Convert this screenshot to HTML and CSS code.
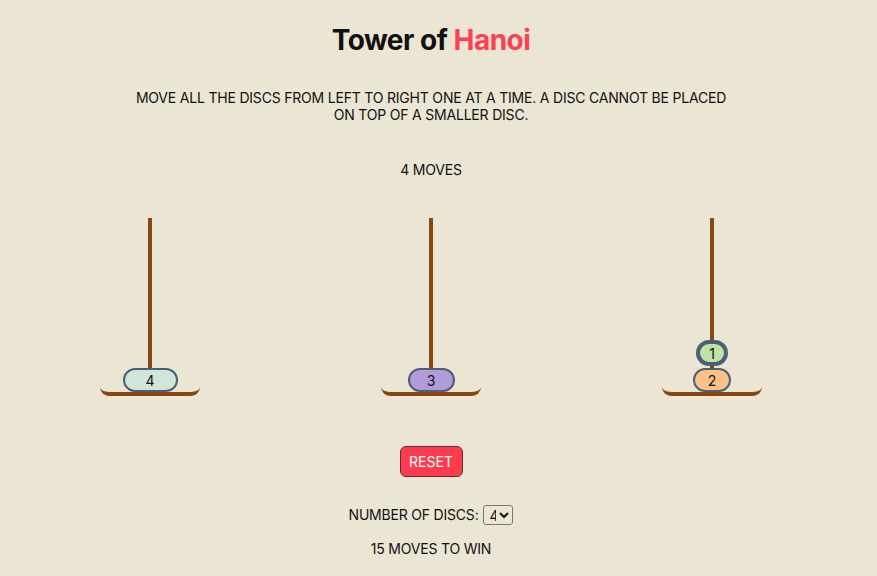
FILE: index.html
```html
<!DOCTYPE html>
<html>
<head>
<meta charset="utf-8">
<link rel="stylesheet" href="styles.css">
</head>
<body>
<main class="app">
  <h1 class="title">Tower of <span class="accent">Hanoi</span></h1>
  <p class="rules">Move all the discs from left to right one at a time. A disc cannot be placed on top of a smaller disc.</p>
  <p class="moves">4 moves</p>
  <div class="towers">
    <div class="tower">
      <div class="pole"></div>
      <div class="stack">
        <div class="disc d4">4</div>
      </div>
      <div class="base"></div>
    </div>
    <div class="tower">
      <div class="pole"></div>
      <div class="stack">
        <div class="disc d3">3</div>
      </div>
      <div class="base"></div>
    </div>
    <div class="tower">
      <div class="pole"></div>
      <div class="stack">
        <div class="disc d1 selected">1</div>
        <div class="disc d2">2</div>
      </div>
      <div class="base"></div>
    </div>
  </div>
  <button class="reset">Reset</button>
  <div class="count">
    <label for="discs">Number of discs:</label>
    <select id="discs" class="select">
      <option>3</option>
      <option selected>4</option>
      <option>5</option>
    </select>
  </div>
  <p class="win">15 moves to win</p>
</main>
</body>
</html>
```
FILE: styles.css
```css
html, body {
  margin: 0;
  padding: 0;
  background: #ebe5d4;
}
body {
  font-family: Inter, "Open Sans", sans-serif;
  color: #111;
}
.app {
  width: 862px;
  display: flex;
  flex-direction: column;
  align-items: center;
  text-transform: uppercase;
  font-size: 14px;
  letter-spacing: -0.2px;
}
.title {
  text-transform: none;
  font-size: 28px;
  font-weight: 700;
  margin: 22px 0 0;
  line-height: 36px;
  letter-spacing: -0.5px;
}
.accent {
  color: #fd3f52;
}
.rules {
  width: 610px;
  text-align: center;
  line-height: 17px;
  margin: 31px 0 0;
}
.moves {
  margin: 38px 0 0;
  line-height: 17px;
}
.towers {
  display: grid;
  grid-template-columns: repeat(3, 100px);
  column-gap: 181px;
  margin-top: 40px;
}
.tower {
  position: relative;
  height: 178px;
  display: flex;
  flex-direction: column;
  justify-content: flex-end;
  align-items: center;
}
.pole {
  position: absolute;
  left: 48px;
  top: 0;
  width: 4px;
  bottom: 4px;
  background: #8b4513;
}
.stack {
  position: relative;
  z-index: 1;
  display: flex;
  flex-direction: column;
  align-items: center;
  gap: 2px;
}
.disc {
  box-sizing: border-box;
  height: 24px;
  border: 2px solid #4a5f78;
  border-radius: 12px;
  display: flex;
  align-items: center;
  justify-content: center;
  font-size: 14px;
  color: #111;
}
.d1 { width: 32px; height: 26px; background: #c0e3a5; border-radius: 13px; }
.d2 { width: 38px; background: #fec287; }
.d3 { width: 47px; background: #b19cd9; }
.d4 { width: 55px; background: #d1e6d9; }
.selected { border-width: 4px; }
.base {
  box-sizing: border-box;
  width: 100px;
  height: 9px;
  margin-top: -5px;
  border-bottom: 4px solid #8b4513;
  border-radius: 0 0 9px 9px;
}
.reset {
  margin-top: 50px;
  width: 63px;
  height: 31px;
  background: #ff3b4f;
  color: #fff;
  border: 1px solid #5a3030;
  border-radius: 6px;
  font-family: inherit;
  font-size: 14px;
  letter-spacing: 0;
  text-transform: uppercase;
  padding: 0;
}
.count {
  margin-top: 28px;
  display: flex;
  align-items: center;
  gap: 5px;
  line-height: 20px;
}
.select {
  font-family: inherit;
  font-size: 14px;
  width: 30px;
  height: 20px;
  padding: 0 0 0 1px;
  background: #ebe5d4;
  border: 1px solid #777;
  border-radius: 3px;
  color: #111;
}
.win {
  margin: 15px 0 0;
  line-height: 17px;
}
```
